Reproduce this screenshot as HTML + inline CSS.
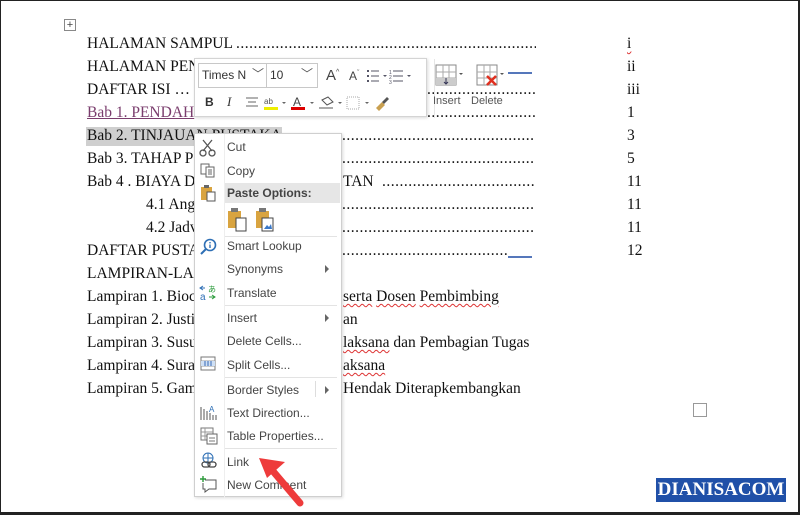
<!DOCTYPE html>
<html><head><meta charset="utf-8"><style>
*{margin:0;padding:0;box-sizing:border-box}
body{width:800px;height:515px;overflow:hidden;background:#fff;position:relative;font-family:"Liberation Serif",serif;}
#frame{position:absolute;left:0;top:0;width:800px;height:515px;border:1px solid #222;border-bottom:3px solid #222;border-right:2px solid #222;}
.l{position:absolute;font-size:15.5px;color:#111;white-space:nowrap;line-height:18px}
.d{position:absolute;font-size:15.5px;color:#111;overflow:hidden;white-space:nowrap;line-height:18px;letter-spacing:0.5px}
.n{position:absolute;left:627px;font-size:15.5px;color:#111;line-height:18px}
.sq{text-decoration:underline wavy #d33;text-underline-offset:2px;text-decoration-thickness:1px}
.tb{position:absolute;left:194px;top:58px;width:233px;height:59px;background:#fff;border:1px solid #d4d4d4;box-shadow:1px 1px 3px rgba(0,0,0,.15);font-family:"Liberation Sans",sans-serif}
.m{position:absolute;left:194px;top:133px;width:148px;height:364px;background:#fff;border:1px solid #cfcfcf;box-shadow:1px 1px 3px rgba(0,0,0,.15);font-family:"Liberation Sans",sans-serif;font-size:12px;color:#444}
.mi{position:absolute;left:32px;white-space:nowrap;line-height:14px}
.sep{position:absolute;left:30px;right:4px;height:1px;background:#e3e3e3}
.ar{position:absolute;left:130px;width:0;height:0;border-left:4px solid #666;border-top:4px solid transparent;border-bottom:4px solid transparent}
</style></head><body>
<div id="frame"></div>
<div style="position:absolute;left:64px;top:19px;width:12px;height:12px;border:1px solid #888;font-size:11px;line-height:10px;text-align:center;color:#444;font-family:'Liberation Sans'">+</div>

<div class="l" style="left:87px;top:35px">HALAMAN SAMPUL</div><div class="d" style="left:236px;top:35px;width:300px">.....................................................................................</div>
<div class="l" style="left:87px;top:58px">HALAMAN PEN</div><div style="position:absolute;left:508px;top:72px;width:24px;border-top:2px solid #5577bb"></div>
<div class="l" style="left:87px;top:81px">DAFTAR ISI …</div><div class="d" style="left:427px;top:81px;width:108px">...................................</div>
<div class="l" style="left:87px;top:104px;color:#7a3d6d;text-decoration:underline">Bab 1. PENDAH</div><div class="d" style="left:427px;top:104px;width:108px">...................................</div>
<div style="position:absolute;left:86px;top:127px;width:196px;height:19px;background:#cfcfcf"></div>
<div class="l" style="left:87px;top:127px">Bab 2. TINJAUAN PUSTAKA</div><div class="d" style="left:342px;top:127px;width:193px">...........................................................</div>
<div class="l" style="left:87px;top:150px">Bab 3. TAHAP P</div><div class="d" style="left:342px;top:150px;width:193px">...........................................................</div>
<div class="l" style="left:87px;top:173px">Bab 4 . BIAYA D</div><div class="l" style="left:343px;top:173px">TAN</div><div class="d" style="left:382px;top:173px;width:153px">.................................................</div>
<div class="l" style="left:146px;top:196px">4.1 Ang</div><div class="d" style="left:342px;top:196px;width:193px">...........................................................</div>
<div class="l" style="left:146px;top:219px">4.2 Jadv</div><div class="d" style="left:342px;top:219px;width:193px">...........................................................</div>
<div class="l" style="left:87px;top:242px">DAFTAR PUSTA</div><div class="d" style="left:342px;top:242px;width:165px">...................................................</div><div style="position:absolute;left:508px;top:256px;width:24px;border-top:2px solid #5577bb"></div>
<div class="l" style="left:87px;top:265px">LAMPIRAN-LA</div>
<div class="l" style="left:87px;top:288px">Lampiran 1. Bioc</div><div class="l" style="left:343px;top:288px"><span class="sq">serta</span> <span class="sq">Dosen</span> <span class="sq">Pembimbing</span></div>
<div class="l" style="left:87px;top:311px">Lampiran 2. Justi</div><div class="l" style="left:343px;top:311px">an</div>
<div class="l" style="left:87px;top:334px">Lampiran 3. Susu</div><div class="l" style="left:343px;top:334px"><span class="sq">laksana</span> dan Pembagian Tugas</div>
<div class="l" style="left:87px;top:357px">Lampiran 4. Sura</div><div class="l" style="left:343px;top:357px"><span class="sq">aksana</span></div>
<div class="l" style="left:87px;top:380px">Lampiran 5. Gam</div><div class="l" style="left:343px;top:380px">Hendak Diterapkembangkan</div>

<div class="n" style="top:35px"><span class="sq">i</span></div>
<div class="n" style="top:58px">ii</div>
<div class="n" style="top:81px">iii</div>
<div class="n" style="top:104px">1</div>
<div class="n" style="top:127px">3</div>
<div class="n" style="top:150px">5</div>
<div class="n" style="top:173px">11</div>
<div class="n" style="top:196px">11</div>
<div class="n" style="top:219px">11</div>
<div class="n" style="top:242px">12</div>

<div style="position:absolute;left:693px;top:403px;width:14px;height:14px;border:1px solid #999"></div>
<div style="position:absolute;left:656px;top:478px;width:130px;height:24px;background:#2050a8;color:#fff;font-family:'Liberation Serif',serif;font-weight:bold;font-size:19px;line-height:24px;text-align:center">DIANISACOM</div>

<!-- toolbar -->
<div class="tb">
 <div style="position:absolute;left:3px;top:4px;width:69px;height:25px;border:1px solid #c8c8c8;font-size:12px;line-height:23px;padding-left:3px;color:#333">Times N<span style="position:absolute;left:53px;top:-1px;font-size:12px;color:#555">﹀</span></div>
 <div style="position:absolute;left:71px;top:4px;width:52px;height:25px;border:1px solid #c8c8c8;font-size:12px;line-height:23px;padding-left:3px;color:#333">10<span style="position:absolute;left:34px;top:-1px;color:#555">﹀</span></div>
 <div style="position:absolute;left:131px;top:8px;font-size:15px;color:#444">A<sup style="font-size:7px">^</sup></div>
 <div style="position:absolute;left:154px;top:10px;font-size:12px;color:#444">A<sup style="font-size:7px">ˇ</sup></div>
 <svg style="position:absolute;left:172px;top:9px" width="60" height="16"><g fill="#556"><rect x="0" y="2" width="2" height="2"/><rect x="0" y="7" width="2" height="2"/><rect x="0" y="12" width="2" height="2"/><rect x="4" y="2.5" width="8" height="1"/><rect x="4" y="7.5" width="8" height="1"/><rect x="4" y="12.5" width="8" height="1"/><path d="M16 7l4 0-2 2z"/><rect x="26" y="2.5" width="10" height="1"/><rect x="26" y="7.5" width="10" height="1"/><rect x="26" y="12.5" width="10" height="1"/><text x="22" y="6" font-size="5">1</text><text x="22" y="11" font-size="5">2</text><text x="22" y="16" font-size="5">3</text><path d="M40 7l4 0-2 2z"/></g></svg>
 <div style="position:absolute;left:239px;top:0;width:1px;height:59px;background:#e6e6e6"></div>
 <div style="position:absolute;left:10px;top:36px;font-size:12px;font-weight:bold;color:#333">B</div>
 <div style="position:absolute;left:32px;top:35px;font-size:13px;font-style:italic;font-family:'Liberation Serif';color:#333">I</div>
 <svg style="position:absolute;left:51px;top:37px" width="160" height="16"><g stroke="#666"><path d="M0 2h12M2 6h8M0 10h12"/></g><text x="18" y="8" font-size="8" fill="#555">ab</text><rect x="18" y="11" width="14" height="3" fill="#ee0"/><path d="M36 6l4 0-2 2z" fill="#666"/><text x="47" y="10" font-size="12" fill="#444">A</text><rect x="45" y="11" width="14" height="3" fill="#d00"/><path d="M64 6l4 0-2 2z" fill="#666"/><path d="M76 4l6-3 5 5-6 3z" fill="none" stroke="#555"/><rect x="73" y="11" width="14" height="2" fill="#aaa"/><path d="M92 6l4 0-2 2z" fill="#666"/><rect x="101" y="1" width="12" height="12" fill="none" stroke="#aaa" stroke-dasharray="1 1"/><path d="M119 6l4 0-2 2z" fill="#666"/><path d="M130 12l6-6 3 3-6 6z" fill="#c9a050"/><path d="M136 6l5-5 2 2-5 5z" fill="#555"/></svg>
 <svg style="position:absolute;left:239px;top:5px" width="30" height="26"><rect x="2" y="1" width="20" height="20" fill="#fff" stroke="#888"/><path d="M2 8h20M2 14h20M9 1v20M15 1v20" stroke="#aaa"/><rect x="2" y="14" width="20" height="7" fill="#ccc"/><path d="M12 14v6M10 18l2 2 2-2" stroke="#335" fill="none"/><path d="M25 9l4 0-2 2z" fill="#555"/></svg>
 <svg style="position:absolute;left:280px;top:5px" width="30" height="26"><rect x="2" y="1" width="20" height="20" fill="#fff" stroke="#888"/><path d="M2 8h20M2 14h20M9 1v20M15 1v20" stroke="#aaa"/><path d="M12 12l9 9M21 12l-9 9" stroke="#e03020" stroke-width="2.5"/><path d="M25 9l4 0-2 2z" fill="#555"/></svg>
 <div style="position:absolute;left:238px;top:36px;font-size:11px;color:#555">Insert</div>
 <div style="position:absolute;left:276px;top:36px;font-size:11px;color:#555">Delete</div>
</div>

<!-- context menu -->
<div class="m">
 <div style="position:absolute;left:29px;top:0;width:1px;height:364px;background:#eee"></div>
 <svg style="position:absolute;left:4px;top:5px" width="18" height="18"><path d="M4 1l9 11M13 1l-9 11" stroke="#555" stroke-width="1.3"/><circle cx="4" cy="14" r="3" fill="none" stroke="#555" stroke-width="1.3"/><circle cx="13" cy="14" r="3" fill="none" stroke="#555" stroke-width="1.3"/></svg>
 <div class="mi" style="top:6px">Cut</div>
 <svg style="position:absolute;left:5px;top:29px" width="18" height="16"><rect x="1" y="1" width="8" height="10" fill="#fff" stroke="#666"/><rect x="6" y="4" width="8" height="10" fill="#fff" stroke="#666"/><path d="M8 7h4M8 9h4M8 11h4" stroke="#666"/></svg>
 <div class="mi" style="top:30px">Copy</div>
 <div style="position:absolute;left:30px;top:49px;width:115px;height:20px;background:#e6e6e6"></div>
 <svg style="position:absolute;left:5px;top:50px" width="18" height="18"><rect x="1" y="3" width="11" height="13" fill="#d9a440"/><rect x="4" y="1" width="5" height="3" fill="#666"/><rect x="7" y="8" width="8" height="9" fill="#fff" stroke="#555"/></svg>
 <div class="mi" style="top:52px;font-weight:bold;color:#444">Paste Options:</div>
 <svg style="position:absolute;left:32px;top:73px" width="60" height="26"><rect x="1" y="4" width="13" height="17" fill="#d9a440"/><rect x="4" y="1" width="7" height="4" fill="#777"/><rect x="9" y="11" width="10" height="13" fill="#fff" stroke="#444"/><rect x="29" y="4" width="13" height="17" fill="#d9a440"/><rect x="32" y="1" width="7" height="4" fill="#777"/><rect x="35" y="11" width="11" height="13" fill="#fff" stroke="#444"/><path d="M37 22l3-4 2 2 2-3 1 5z" fill="#3a78c8"/></svg>
 <div class="sep" style="top:102px"></div>
 <svg style="position:absolute;left:5px;top:104px" width="18" height="18"><circle cx="10" cy="7" r="5.5" fill="none" stroke="#2e6fb5" stroke-width="1.6"/><path d="M6 11l-5 5" stroke="#2e6fb5" stroke-width="2"/><rect x="9.3" y="4" width="1.4" height="1.4" fill="#2e6fb5"/><rect x="9.3" y="6.5" width="1.4" height="3.5" fill="#2e6fb5"/></svg>
 <div class="mi" style="top:105px">Smart Lookup</div>
 <div class="mi" style="top:128px">Synonyms</div><div class="ar" style="top:131px"></div>
 <svg style="position:absolute;left:4px;top:150px" width="18" height="18"><path d="M1 4h5M4 2l-3 2 3 2" stroke="#2e6fb5" fill="none"/><text x="1" y="16" font-size="10" fill="#2e6fb5">a</text><text x="9" y="8" font-size="8" fill="#2a9a3a">あ</text><path d="M10 13h6M13 11l3 2-3 2" stroke="#2a9a3a" fill="none"/></svg>
 <div class="mi" style="top:152px">Translate</div>
 <div class="sep" style="top:171px"></div>
 <div class="mi" style="top:177px">Insert</div><div class="ar" style="top:180px"></div>
 <div class="mi" style="top:200px">Delete Cells...</div>
 <svg style="position:absolute;left:5px;top:222px" width="18" height="16"><rect x="1" y="1" width="14" height="13" fill="#fff" stroke="#777"/><path d="M1 5h14M1 10h14" stroke="#999"/><rect x="1" y="5" width="14" height="5" fill="#cfe0f5"/><path d="M5 5v5M8 5v5M11 5v5" stroke="#3a6ab5"/></svg>
 <div class="mi" style="top:224px">Split Cells...</div>
 <div class="sep" style="top:243px"></div>
 <div class="mi" style="top:249px">Border Styles</div><div style="position:absolute;left:120px;top:247px;width:1px;height:16px;background:#ddd"></div><div class="ar" style="top:252px"></div>
 <svg style="position:absolute;left:5px;top:269px" width="18" height="18"><path d="M1 4v13M4 6v11M7 8v9M10 10v7M13 12v5M16 12v5" stroke="#555"/><text x="9" y="9" font-size="8" fill="#2e6fb5">A</text></svg>
 <div class="mi" style="top:272px">Text Direction...</div>
 <svg style="position:absolute;left:5px;top:293px" width="18" height="18"><rect x="1" y="1" width="12" height="12" fill="#fff" stroke="#777"/><path d="M1 5h12M1 9h12M5 1v12" stroke="#999"/><rect x="7" y="7" width="10" height="10" fill="#fff" stroke="#666"/><path d="M9 11h6M9 14h6" stroke="#777"/></svg>
 <div class="mi" style="top:295px">Table Properties...</div>
 <div class="sep" style="top:314px"></div>
 <svg style="position:absolute;left:5px;top:318px" width="18" height="18"><circle cx="8" cy="6" r="5" fill="none" stroke="#2e6fb5"/><path d="M3 6h10M8 1v10" stroke="#2e6fb5"/><rect x="2" y="10" width="8" height="5" rx="2.5" fill="none" stroke="#444" stroke-width="1.3"/><rect x="8" y="10" width="8" height="5" rx="2.5" fill="none" stroke="#444" stroke-width="1.3"/></svg>
 <div class="mi" style="top:321px">Link</div>
 <svg style="position:absolute;left:5px;top:341px" width="18" height="18"><path d="M5 5h11v9H9l-4 3v-3H3V8" fill="none" stroke="#555"/><path d="M3 1v6M0 4h6" stroke="#2a9a3a" stroke-width="1.4"/></svg>
 <div class="mi" style="top:344px">New Comment</div>
</div>

<svg style="position:absolute;left:0;top:0" width="800" height="515"><path d="M300 503L272 470" stroke="#ee3b3b" stroke-width="7" stroke-linecap="round"/><path d="M259 458l26 4-18 16z" fill="#ee3b3b"/></svg>
</body></html>
